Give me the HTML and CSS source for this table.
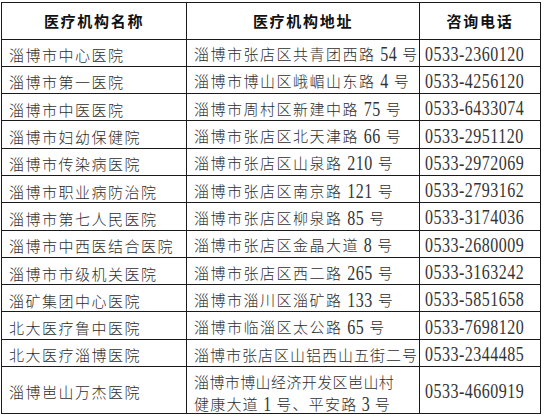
FILE: index.html
```html
<!DOCTYPE html>
<html lang="zh-CN">
<head>
<meta charset="utf-8">
<title>淄博市医院</title>
<link rel="stylesheet" href="styles.css">
</head>
<body>
<div class="table">
  <div class="cell head"><span>医疗机构名称</span></div>
  <div class="cell head"><span>医疗机构地址</span></div>
  <div class="cell head"><span>咨询电话</span></div>

  <div class="cell"><span>淄博市中心医院</span></div>
  <div class="cell"><span>淄博市张店区共青团西路 <span class="num">54</span> 号</span></div>
  <div class="cell phone"><span class="num">0533-2360120</span></div>

  <div class="cell"><span>淄博市第一医院</span></div>
  <div class="cell"><span>淄博市博山区峨嵋山东路 <span class="num">4</span> 号</span></div>
  <div class="cell phone"><span class="num">0533-4256120</span></div>

  <div class="cell"><span>淄博市中医医院</span></div>
  <div class="cell"><span>淄博市周村区新建中路 <span class="num">75</span> 号</span></div>
  <div class="cell phone"><span class="num">0533-6433074</span></div>

  <div class="cell"><span>淄博市妇幼保健院</span></div>
  <div class="cell"><span>淄博市张店区北天津路 <span class="num">66</span> 号</span></div>
  <div class="cell phone"><span class="num">0533-2951120</span></div>

  <div class="cell"><span>淄博市传染病医院</span></div>
  <div class="cell"><span>淄博市张店区山泉路 <span class="num">210</span> 号</span></div>
  <div class="cell phone"><span class="num">0533-2972069</span></div>

  <div class="cell"><span>淄博市职业病防治院</span></div>
  <div class="cell"><span>淄博市张店区南京路 <span class="num">121</span> 号</span></div>
  <div class="cell phone"><span class="num">0533-2793162</span></div>

  <div class="cell"><span>淄博市第七人民医院</span></div>
  <div class="cell"><span>淄博市张店区柳泉路 <span class="num">85</span> 号</span></div>
  <div class="cell phone"><span class="num">0533-3174036</span></div>

  <div class="cell"><span>淄博市中西医结合医院</span></div>
  <div class="cell"><span>淄博市张店区金晶大道 <span class="num">8</span> 号</span></div>
  <div class="cell phone"><span class="num">0533-2680009</span></div>

  <div class="cell"><span>淄博市市级机关医院</span></div>
  <div class="cell"><span>淄博市张店区西二路 <span class="num">265</span> 号</span></div>
  <div class="cell phone"><span class="num">0533-3163242</span></div>

  <div class="cell"><span>淄矿集团中心医院</span></div>
  <div class="cell"><span>淄博市淄川区淄矿路 <span class="num">133</span> 号</span></div>
  <div class="cell phone"><span class="num">0533-5851658</span></div>

  <div class="cell"><span>北大医疗鲁中医院</span></div>
  <div class="cell"><span>淄博市临淄区太公路 <span class="num">65</span> 号</span></div>
  <div class="cell phone"><span class="num">0533-7698120</span></div>

  <div class="cell"><span>北大医疗淄博医院</span></div>
  <div class="cell tight"><span>淄博市张店区山铝西山五街二号</span></div>
  <div class="cell phone"><span class="num">0533-2344485</span></div>

  <div class="cell"><span>淄博岜山万杰医院</span></div>
  <div class="cell multi"><span class="line1">淄博市博山经济开发区岜山村</span><br><span class="line2">健康大道 <span class="num">1</span> 号、平安路 <span class="num">3</span> 号</span></div>
  <div class="cell phone"><span class="num">0533-4660919</span></div>
</div>
</body>
</html>
```

FILE: styles.css
```css
html, body {
  margin: 0;
  padding: 0;
  background: #ffffff;
}

body {
  font-family: "Noto Sans CJK SC", "Noto Sans", sans-serif;
  color: #2e2e2e;
}

.table {
  display: grid;
  grid-template-columns: 184px 232px 120px;
  grid-template-rows: 35.5px repeat(12, 26.3px) 45.6px;
  gap: 1px;
  padding: 1px;
  background: #1a1a1a;
  width: max-content;
  margin: 2px 0 0 1px;
}

.cell {
  background: #ffffff;
  display: flex;
  align-items: center;
  padding: 4px 0 0 7px;
  font-size: 15px;
  font-weight: 300;
  letter-spacing: 1.5px;
  white-space: nowrap;
  line-height: 1;
}

.head {
  justify-content: center;
  padding: 0;
  font-weight: 700;
  letter-spacing: 1.7px;
  color: #111111;
}

.phone {
  padding-left: 5px;
}

.tight {
  letter-spacing: 1px;
}

.multi {
  display: block;
  line-height: 21.5px;
  padding-top: 4px;
}

.line1 {
  letter-spacing: 0.4px;
}

.line2 {
  letter-spacing: 1.2px;
}

.num {
  display: inline-block;
  font-family: "Liberation Serif", serif;
  font-size: 16px;
  font-weight: 400;
  letter-spacing: 0.5px;
  transform: scaleY(1.25);
  color: #333333;
}
```
